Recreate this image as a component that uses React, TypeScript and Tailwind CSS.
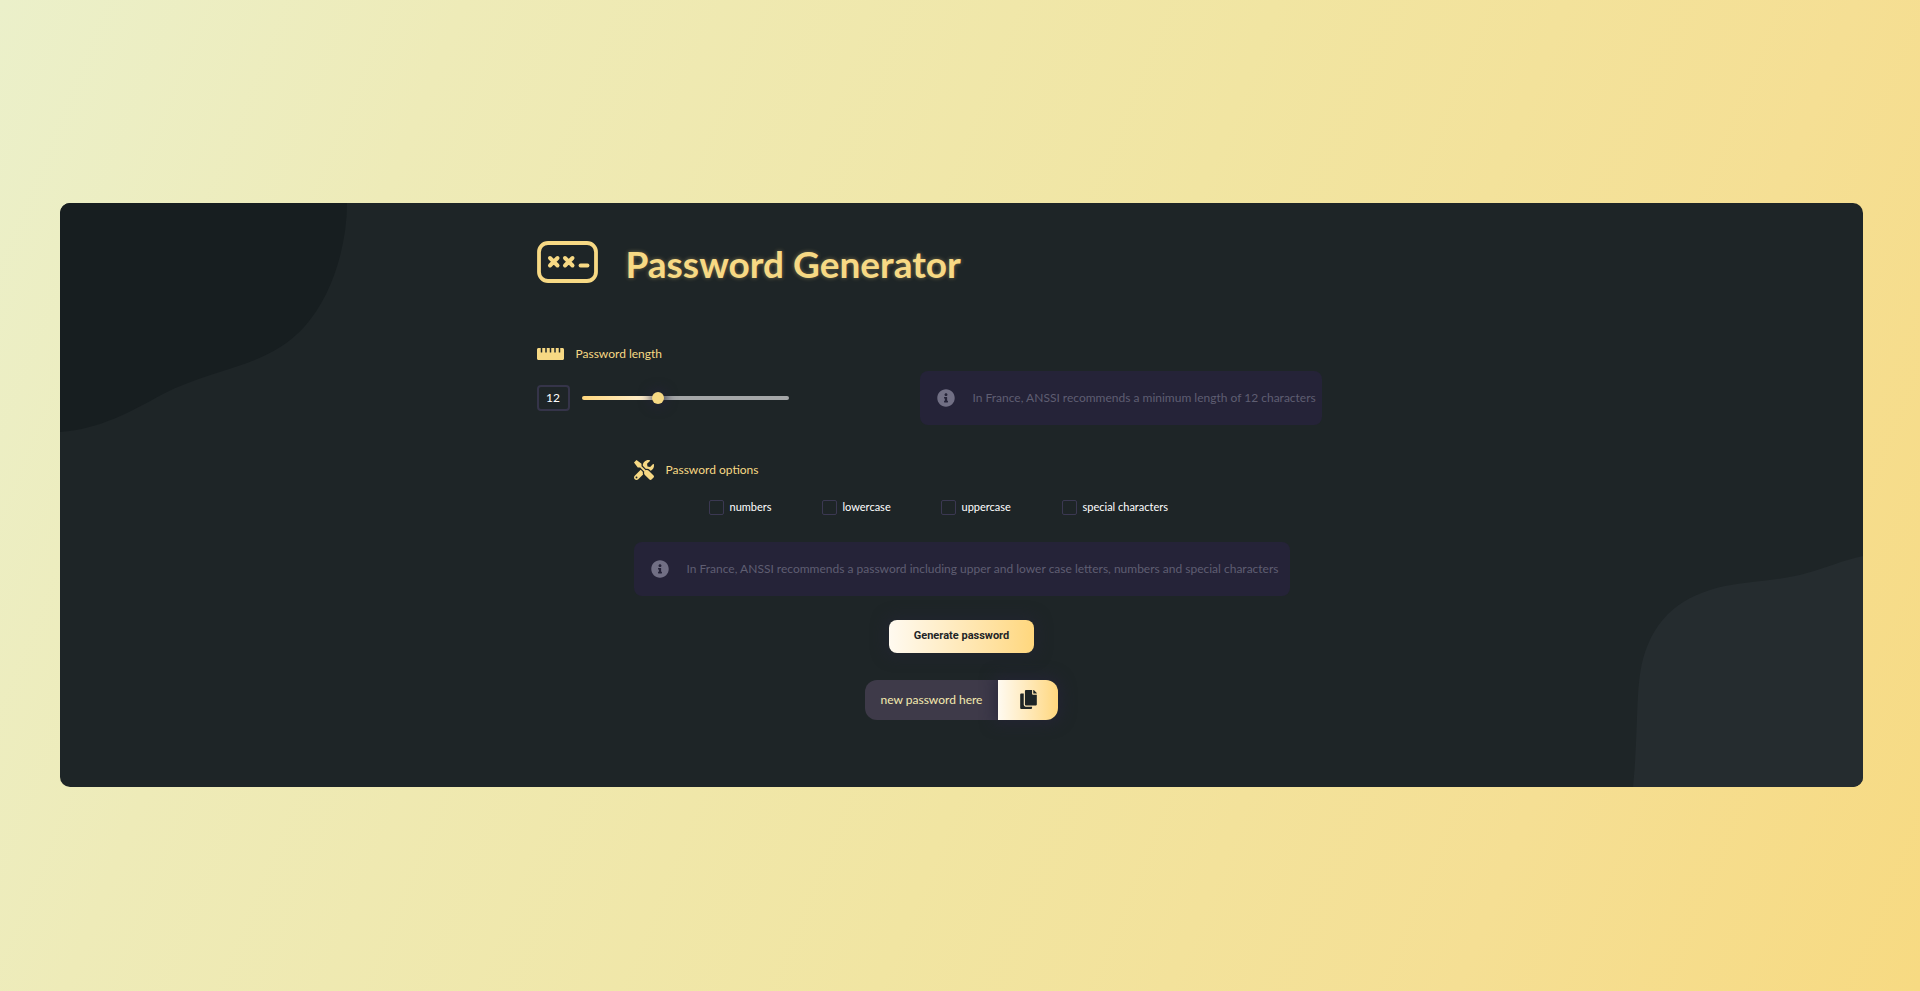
import { useState } from "react";
import { FaRulerHorizontal, FaTools, FaInfoCircle, FaCopy } from "react-icons/fa";

const OPTIONS = [
  { id: "numbers", label: "numbers", width: "w-[113px]" },
  { id: "lowercase", label: "lowercase", width: "w-[119px]" },
  { id: "uppercase", label: "uppercase", width: "w-[121px]" },
  { id: "special", label: "special characters", width: "w-auto" },
];

function Logo() {
  return (
    <svg className="h-[42px] w-[61px] shrink-0" viewBox="0 0 61 42" fill="none" stroke="#f7d984" strokeLinecap="round" aria-hidden="true">
      <rect x="2" y="2" width="57" height="38" rx="9" strokeWidth="3.8" />
      <path d="M13 17l7.5 7.5M20.5 17L13 24.500M28 17l7.500 7.500M35.500 17l-7.500 7.500" strokeWidth="4" />
      <path d="M43.500 24.500h7" strokeWidth="3.800" />
    </svg>
  );
}

function Notice({ children }: { children: string }) {
  return (
    <p className="flex h-[54px] items-center gap-[18px] rounded-lg bg-[#252338] pl-[17px] text-xs whitespace-nowrap text-[#5f5e72]">
      <FaInfoCircle className="size-[18px] shrink-0 text-[#716f84]" />
      {children}
    </p>
  );
}

export default function App() {
  const [length, setLength] = useState(12);
  const percent = ((length - 4) / 22) * 100;
  const track = `linear-gradient(90deg, #ffd77d 0%, #fff3dc ${percent}%, #a5a7a8 ${percent}%)`;

  return (
    <div className="flex min-h-screen flex-col justify-center bg-[linear-gradient(112deg,#ebf0ca_0%,#eeebb8_20%,#f1e5a2_55%,#f5df94_80%,#f7da82_100%)] pr-[57px] pb-0.5 pl-[60px] font-['Lato',sans-serif]">
      <main className="relative flex flex-col items-center overflow-hidden rounded-[10px] bg-[#1e2527] pt-[38px] pb-[67px]">
        <svg className="absolute top-0 left-0 h-[229px] w-[287px]" viewBox="0 0 287 229" aria-hidden="true">
          <path d="M0 0H287C287 45 271 94 245 123C208 165 154 164 103 191C70 209 40 226 0 229Z" fill="#171e20" />
        </svg>
        <svg className="absolute right-0 bottom-0 h-[231px] w-[230px]" viewBox="0 0 230 231" aria-hidden="true">
          <path d="M0 231C6 170 2 134 10 103C22 60 50 39 92 30C118 25 145 25 174 17C193 12 210 4 230 0V231Z" fill="#252c2f" />
        </svg>

        <div className="relative w-[850px]">
          <header className="flex h-[42px] items-center gap-7">
            <Logo />
            <h1 className="mt-1 text-[37px] leading-[44px] font-bold text-[#f7d984] [text-shadow:0_0_4px_#f7d98466]">Password Generator</h1>
          </header>

          <section className="mt-[59px] grid grid-cols-[383px_402px]">
            <div>
              <label htmlFor="length" className="flex h-6 items-center gap-3 text-xs text-[#f7d984]">
                <FaRulerHorizontal className="h-6 w-[27px]" />
                Password length
              </label>
              <div className="mt-[19px] flex h-[26px] items-center gap-3">
                <output htmlFor="length" className="flex h-[26px] w-[33px] items-center justify-center rounded-[4px] border-2 border-[#353449] text-xs text-white">
                  {length}
                </output>
                <input
                  id="length"
                  type="range"
                  min={4}
                  max={26}
                  value={length}
                  onChange={(event) => setLength(Number(event.target.value))}
                  style={{ backgroundImage: track }}
                  className="h-1 w-[207px] appearance-none rounded-full [&::-webkit-slider-thumb]:size-3 [&::-webkit-slider-thumb]:appearance-none [&::-webkit-slider-thumb]:rounded-full [&::-webkit-slider-thumb]:bg-[#f7d984] [&::-webkit-slider-thumb]:shadow-[0_0_12px_2px_#252338]"
                />
              </div>
            </div>
            <div className="pt-[29px]">
              <Notice>In France, ANSSI recommends a minimum length of 12 characters</Notice>
            </div>
          </section>
        </div>

        <section className="relative mt-[33px] w-[656px]">
          <h2 className="flex h-6 items-center gap-3 text-xs text-[#f7d984]">
            <FaTools className="size-5" />
            Password options
          </h2>
          <div className="mt-[18px] flex pl-[75px]">
            {OPTIONS.map((option) => (
              <label key={option.id} htmlFor={option.id} className={`flex h-[15px] items-center gap-[6px] text-[11px] whitespace-nowrap text-white ${option.width}`}>
                <input id={option.id} type="checkbox" className="size-[15px] shrink-0 appearance-none rounded-[2px] border border-[#3b3852] checked:bg-[#f7d984]" />
                {option.label}
              </label>
            ))}
          </div>
          <div className="mt-[27px]">
            <Notice>In France, ANSSI recommends a password including upper and lower case letters, numbers and special characters</Notice>
          </div>
        </section>

        <button type="button" className="relative mt-6 h-[33px] w-[145px] rounded-lg bg-linear-to-r from-[#fffaf0] to-[#ffd77d] font-['Roboto',sans-serif] text-[11px] font-bold text-[#1e2527] shadow-[0_0_14px_4px_#23243399]">
          Generate password
        </button>

        <div className="relative mt-[27px] flex h-10 w-[193px] rounded-xl">
          <output className="flex flex-1 items-center justify-center rounded-l-xl bg-[#3e3a49] text-xs text-[#f5eab0]">new password here</output>
          <button type="button" aria-label="Copy password" className="flex w-[60px] items-center justify-center rounded-r-xl bg-linear-to-r from-[#fffaf0] to-[#ffd77d] text-[#1e2527] shadow-[0_0_14px_4px_#252338b3]">
            <FaCopy className="h-[19px] w-[17px]" />
          </button>
        </div>
      </main>
    </div>
  );
}
